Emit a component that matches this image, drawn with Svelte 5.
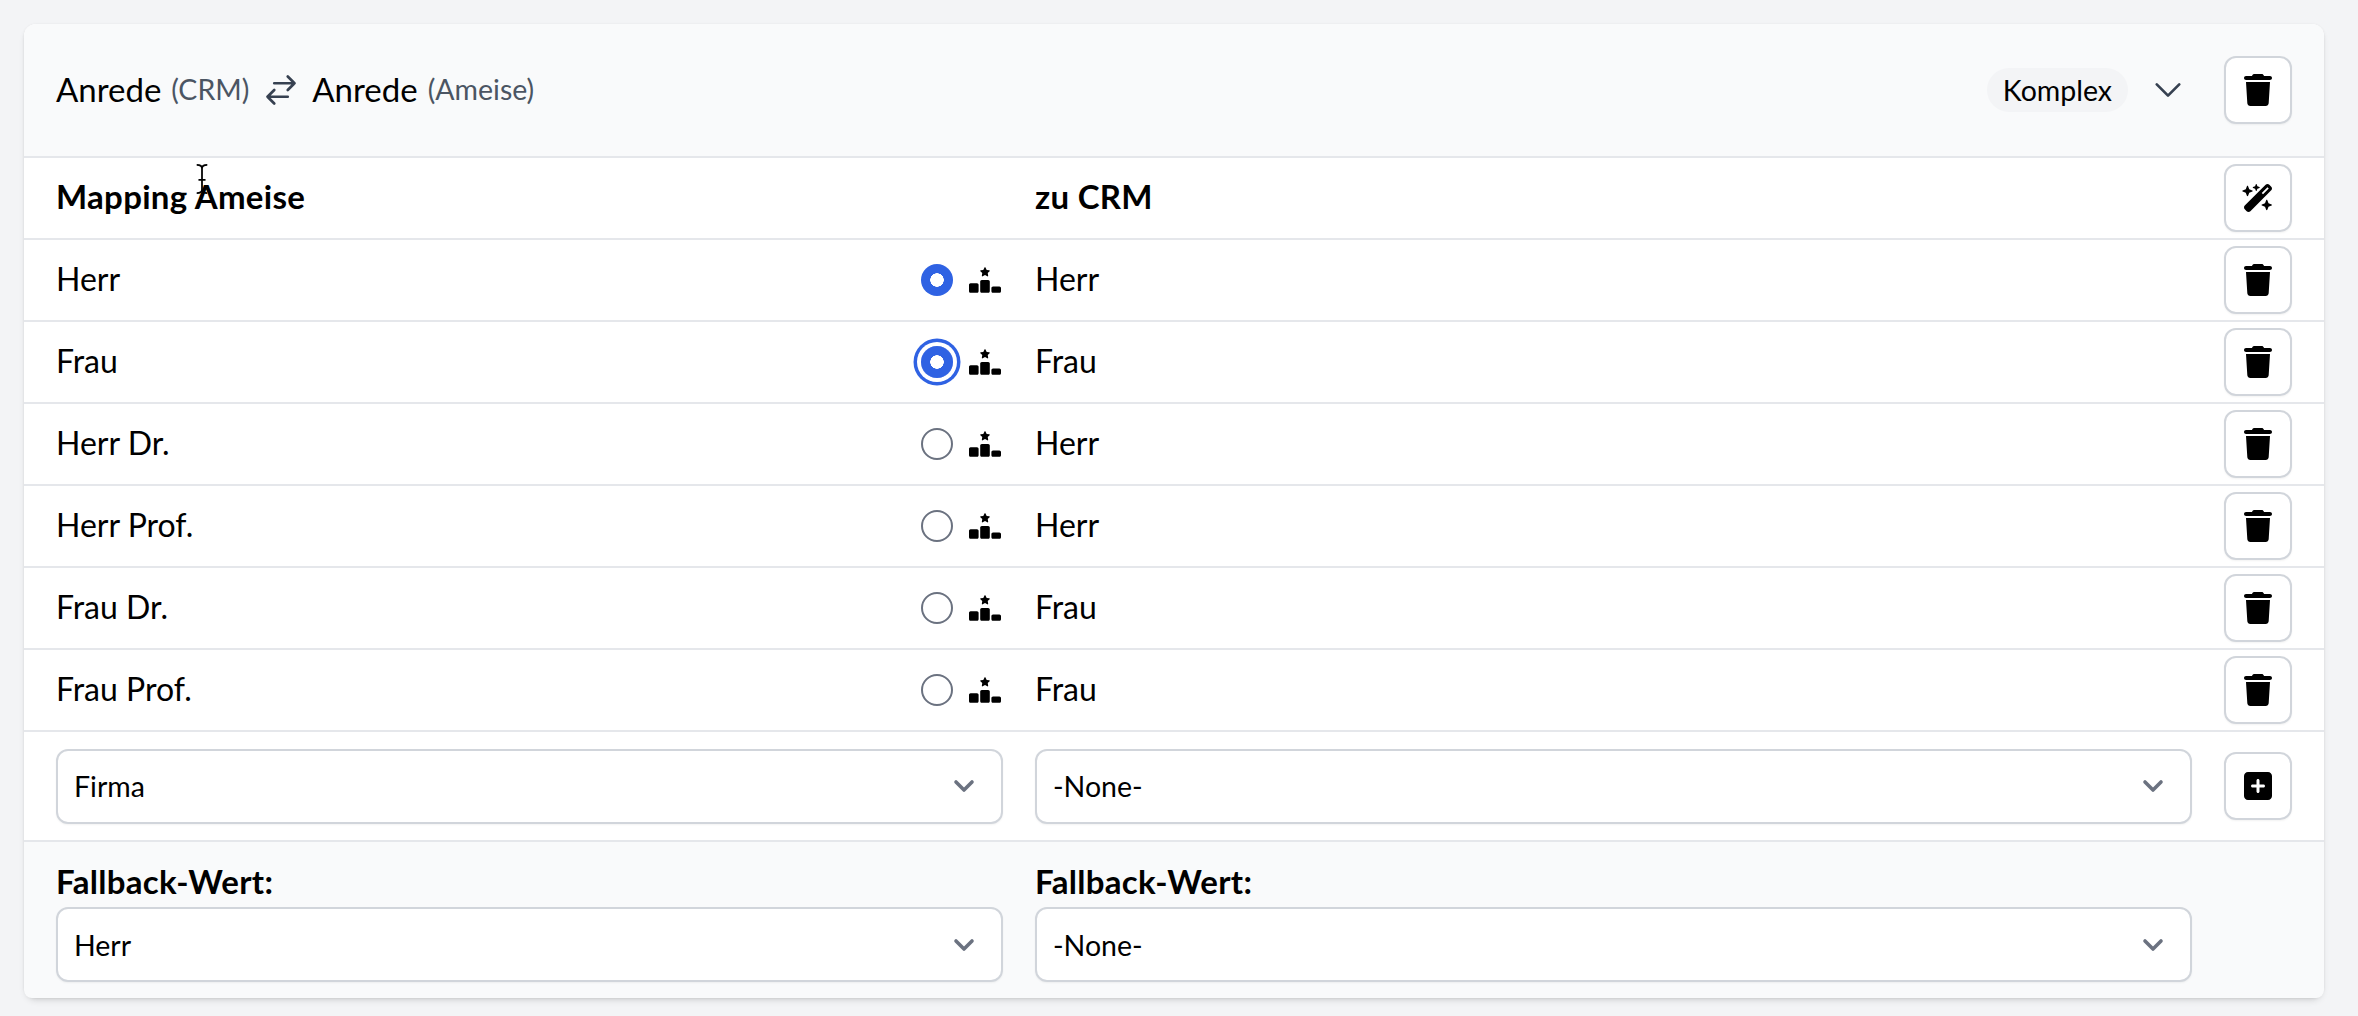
<script lang="ts">
  const rows = [
    { left: 'Herr', right: 'Herr', state: 'checked' },
    { left: 'Frau', right: 'Frau', state: 'focus' },
    { left: 'Herr Dr.', right: 'Herr', state: '' },
    { left: 'Herr Prof.', right: 'Herr', state: '' },
    { left: 'Frau Dr.', right: 'Frau', state: '' },
    { left: 'Frau Prof.', right: 'Frau', state: '' }
  ];
  const trash = 'M135.2 17.7L128 32H32C14.3 32 0 46.3 0 64S14.3 96 32 96H416c17.7 0 32-14.3 32-32s-14.3-32-32-32H320l-7.2-14.3C307.4 6.8 296.3 0 284.2 0H163.8c-12.1 0-23.2 6.8-28.6 17.7zM416 128H32L53.2 467c1.6 25.3 22.6 45 47.9 45H346.9c25.3 0 46.3-19.7 47.9-45L416 128z';
  const wand = 'M234.7 42.7L197 56.8c-3 1.1-5 4-5 7.2s2 6.1 5 7.2l37.7 14.1L248.8 123c1.1 3 4 5 7.2 5s6.1-2 7.2-5l14.1-37.7L315 71.2c3-1.1 5-4 5-7.2s-2-6.1-5-7.2L277.3 42.7 263.2 5c-1.1-3-4-5-7.2-5s-6.1 2-7.2 5L234.7 42.7zM46.1 395.4c-18.7 18.7-18.7 49.1 0 67.9l34.6 34.6c18.7 18.7 49.1 18.7 67.9 0L529.9 116.5c18.7-18.7 18.7-49.1 0-67.9L495.3 14.1c-18.7-18.7-49.1-18.7-67.9 0L46.1 395.4zM484.6 82.6l-105 105-23.3-23.3 105-105 23.3 23.3zM7.5 117.2C3 118.9 0 123.2 0 128s3 9.1 7.5 10.8L64 160l21.2 56.5c1.7 4.5 6 7.5 10.8 7.5s9.1-3 10.8-7.5L128 160l56.5-21.2c4.5-1.7 7.5-6 7.5-10.8s-3-9.1-7.5-10.8L128 96 106.8 39.5C105.1 35 100.8 32 96 32s-9.1 3-10.8 7.5L64 96 7.5 117.2zm352 256c-4.5 1.7-7.5 6-7.5 10.8s3 9.1 7.5 10.8L416 416l21.2 56.5c1.7 4.5 6 7.5 10.8 7.5s9.1-3 10.8-7.5L480 416l56.5-21.2c4.5-1.7 7.5-6 7.5-10.8s-3-9.1-7.5-10.8L480 352l-21.2-56.5c-1.7-4.5-6-7.5-10.8-7.5s-9.1 3-10.8 7.5L416 352l-56.5 21.2z';
  const plus = 'M64 32C28.7 32 0 60.7 0 96V416c0 35.3 28.7 64 64 64H384c35.3 0 64-28.7 64-64V96c0-35.3-28.7-64-64-64H64zM200 344V280H136c-13.3 0-24-10.7-24-24s10.7-24 24-24h64V168c0-13.3 10.7-24 24-24s24 10.7 24 24v64h64c13.3 0 24 10.7 24 24s-10.7 24-24 24H248v64c0 13.3-10.7 24-24 24s-24-10.7-24-24z';
  const ranking = 'M353.8 54.1L330.2 6.3c-3.9-8.3-16.1-8.6-20.4 0L286.2 54.1l-52.3 7.5c-9.3 1.4-13.3 12.9-6.4 19.8l38 37-9 52.1c-1.4 9.3 8.2 16.5 16.8 12.2l46.9-24.8 46.6 24.4c8.6 4.3 18.3-2.9 16.8-12.2l-9-52.1 38-36.6c6.8-6.8 2.9-18.3-6.4-19.8l-52.3-7.5zM256 256c-17.7 0-32 14.3-32 32V480c0 17.7 14.3 32 32 32H384c17.7 0 32-14.3 32-32V288c0-17.7-14.3-32-32-32H256zM32 320c-17.7 0-32 14.3-32 32V480c0 17.7 14.3 32 32 32H160c17.7 0 32-14.3 32-32V352c0-17.7-14.3-32-32-32H32zm416 96v64c0 17.7 14.3 32 32 32H608c17.7 0 32-14.3 32-32V416c0-17.7-14.3-32-32-32H480c-17.7 0-32 14.3-32 32z';
</script>

{#snippet icon(d, w, h, cls)}
  <svg class={cls} viewBox="0 0 {w} {h}" fill="currentColor" aria-hidden="true"><path {d} /></svg>
{/snippet}

{#snippet select(value)}
  <div class="select">
    <span>{value}</span>
    <svg class="select-chev" viewBox="0 0 20 20" fill="none" stroke="currentColor" stroke-width="1.8" stroke-linecap="round" stroke-linejoin="round" aria-hidden="true"><path d="M6 8l4 4 4-4" /></svg>
  </div>
{/snippet}

<div class="page">
  <section class="card">
    <header class="head">
      <div class="title">
        <span>Anrede</span> <small>(CRM)</small>
        <svg class="swap" viewBox="0 0 24 24" fill="none" stroke="currentColor" stroke-width="1.8" stroke-linecap="round" stroke-linejoin="round" aria-hidden="true"><path d="M7.5 21 3 16.5m0 0L7.5 12M3 16.5h13.5m0-13.5L21 7.5m0 0L16.5 12M21 7.5H7.5" /></svg>
        <span>Anrede</span> <small>(Ameise)</small>
      </div>
      <span class="badge">Komplex</span>
      <svg class="chev" viewBox="0 0 24 24" fill="none" stroke="currentColor" stroke-width="1.8" stroke-linecap="round" stroke-linejoin="round" aria-hidden="true"><path d="m19.5 8.25-7.5 7.5-7.5-7.5" /></svg>
      <button class="btn">{@render icon(trash, 448, 512, 'ico')}</button>
    </header>

    <div class="row">
      <div class="cell bold up">Mapping Ameise</div>
      <div class="cell bold up">zu CRM</div>
      <button class="btn">{@render icon(wand, 576, 512, 'ico-wand')}</button>
    </div>

    {#each rows as r}
      <div class="row">
        <div class="cell split">
          <span class="up">{r.left}</span>
          <span class="tools">
            <span class="radio {r.state}"></span>
            {@render icon(ranking, 640, 512, 'ico-rank')}
          </span>
        </div>
        <div class="cell up">{r.right}</div>
        <button class="btn">{@render icon(trash, 448, 512, 'ico')}</button>
      </div>
    {/each}

    <div class="row add">
      {@render select('Firma')}
      {@render select('-None-')}
      <button class="btn">{@render icon(plus, 448, 512, 'ico')}</button>
    </div>

    <div class="row foot">
      <label class="field"><span class="bold">Fallback-Wert:</span>{@render select('Herr')}</label>
      <label class="field"><span class="bold">Fallback-Wert:</span>{@render select('-None-')}</label>
    </div>

    <svg class="cursor" viewBox="0 0 14 34" fill="none" stroke="#000" stroke-width="2" aria-hidden="true"><path d="M1 1c3 0 6 1 6 4v24c0 3-3 4-6 4M13 1c-3 0-6 1-6 4v24c0 3 3 4 6 4M3 18h8" /></svg>
  </section>
</div>

<style>
  :global(body) { background: #f3f4f6; }
  .page {
    padding: 24px 34px 18px 24px;
    height: 1016px; box-sizing: border-box;
    font-family: Lato, "Noto Sans", sans-serif;
    font-size: 32px; color: #000;
  }
  .card {
    position: relative;
    background: #fff; border-radius: 12px;
    box-shadow: 0 4px 6px -1px rgb(0 0 0 / 0.1), 0 2px 4px -2px rgb(0 0 0 / 0.1), 0 0 3px rgb(0 0 0 / 0.05);
  }
  .head {
    height: 134px; box-sizing: border-box;
    padding: 0 32px;
    display: flex; align-items: center;
    background: #f9fafb; border-radius: 12px 12px 0 0;
    border-bottom: 2px solid #e5e7eb;
  }
  .title { flex: 1; display: flex; align-items: center; gap: 10px; padding-bottom: 2px; font-size: 33px; }
  small { font-size: 28.5px; color: #4b5563; }
  .swap { width: 36px; height: 36px; color: #374151; margin: 2px 3px 0 4px; }
  .badge {
    height: 44px; padding: 0 16px; display: flex; align-items: center;
    border-radius: 22px; background: #f3f4f6; font-size: 28.5px;
  }
  .chev { width: 36px; height: 36px; color: #374151; margin: 0 38px 0 22px; }
  .btn {
    width: 68px; height: 68px; padding: 0;
    display: flex; align-items: center; justify-content: center;
    background: #fff; color: #000;
    border: 2px solid #d1d5db; border-radius: 12px;
    box-shadow: 0 1px 2px rgb(0 0 0 / 0.05);
  }
  .ico { width: 28px; height: 32px; display: block; }
  .ico-wand { width: 32px; height: 28px; display: block; }
  .ico-rank { width: 32px; height: 26px; display: block; }
  .row {
    display: grid; grid-template-columns: 947px 1157px 68px; column-gap: 32px;
    align-items: center;
    height: 82px; box-sizing: border-box;
    padding: 0 32px;
    border-bottom: 2px solid #e5e7eb;
  }
  .up { padding-bottom: 3px; }
  .bold { font-weight: 700; font-size: 33px; letter-spacing: 0.3px; }
  .bold.up { padding-bottom: 5px; }
  .split { display: flex; justify-content: space-between; align-items: center; }
  .tools { display: flex; align-items: center; gap: 16px; margin-right: 2px; }
  .radio {
    width: 32px; height: 32px; box-sizing: border-box;
    border-radius: 50%; border: 2px solid #6b7280; background: #fff;
  }
  .radio.checked, .radio.focus {
    border: 0;
    background: radial-gradient(circle, #fff 0 6.5px, #2f62e3 7px);
  }
  .radio.focus { box-shadow: 0 0 0 4px #fff, 0 0 0 7.5px #2f62e3; }
  .add { height: 110px; }
  .select {
    height: 75px; box-sizing: border-box;
    padding: 0 16px;
    display: flex; align-items: center; justify-content: space-between;
    background: #fff; border: 2px solid #d1d5db; border-radius: 12px;
    box-shadow: 0 1px 2px rgb(0 0 0 / 0.05);
    font-size: 28.5px;
  }
  .select-chev { width: 40px; height: 40px; color: #6b7280; margin-right: 1px; }
  .foot {
    height: 156px; align-items: start;
    padding-top: 20px;
    background: #f9fafb; border-bottom: 0;
    border-radius: 0 0 8px 8px;
  }
  .field { display: flex; flex-direction: column; gap: 7px; }
  .field .bold { line-height: 38px; }
  .cursor { position: absolute; left: 171px; top: 140px; width: 14px; height: 30px; }
</style>
